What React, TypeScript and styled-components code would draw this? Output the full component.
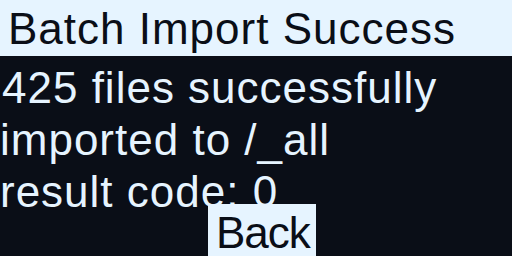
import React from 'react'
import styled, { createGlobalStyle } from 'styled-components';

const ink = '#0a0e17';
const paper = '#e6f4ff';

const Global = createGlobalStyle`
  html, body {
    margin: 0;
    padding: 0;
    background: ${ink};
  }
  #root {
    width: 512px;
    height: 256px;
  }
`;

const Screen = styled.div`
  position: relative;
  width: 512px;
  height: 256px;
  overflow: hidden;
  background: ${ink};
  font-family: "Liberation Sans", Arial, sans-serif;
  font-size: 44px;
  line-height: 52px;
  letter-spacing: 1px;
  white-space: nowrap;
`;

const TitleBar = styled.header`
  height: 56px;
  box-sizing: border-box;
  padding: 3px 0 0 8px;
  background: ${paper};
  color: ${ink};
`;

const Message = styled.div`
  display: flex;
  flex-direction: column;
  padding-top: 6px;
  color: ${paper};
`;

const Line = styled.div<{ $indent?: number }>`
  height: 52px;
  padding-left: ${p => p.$indent ?? 0}px;
`;

const BackButton = styled.button`
  position: absolute;
  left: 208px;
  bottom: 0;
  width: 108px;
  height: 52px;
  box-sizing: border-box;
  padding: 3px 0 0 8px;
  margin: 0;
  border: none;
  background: ${paper};
  color: ${ink};
  font: inherit;
  letter-spacing: -1px;
  line-height: 52px;
  text-align: left;
`;

const App: React.FC = () => {
  return (
    <>
      <Global />
      <Screen>
        <TitleBar>Batch Import Success</TitleBar>
        <Message>
          <Line $indent={2}>425 files successfully</Line>
          <Line>imported to /_all</Line>
          <Line>result code: 0</Line>
        </Message>
        <BackButton>Back</BackButton>
      </Screen>
    </>
  )
};

export default App;
